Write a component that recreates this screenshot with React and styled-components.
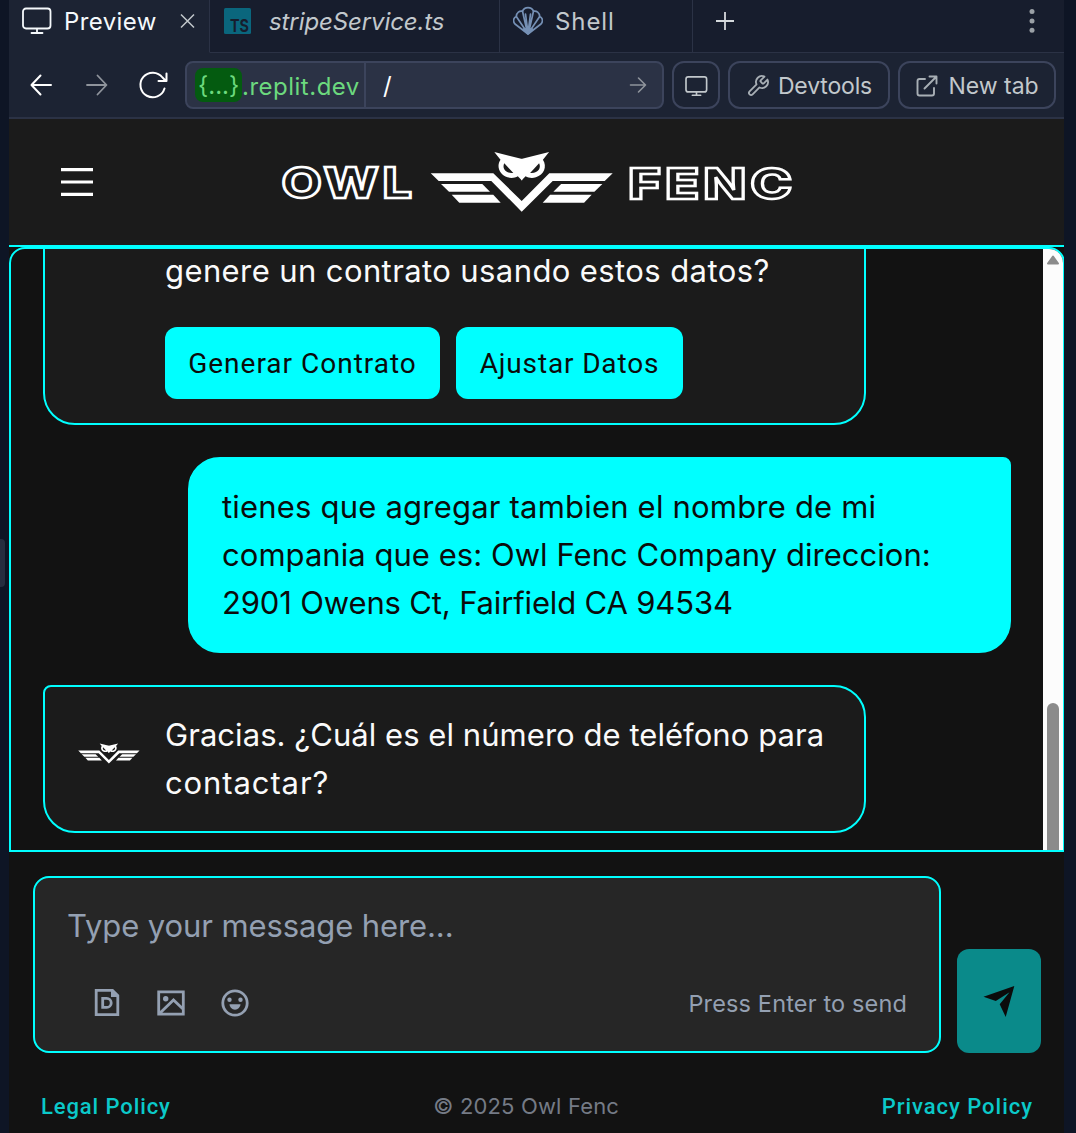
import React from "react";
import styled, { createGlobalStyle } from "styled-components";

const Global = createGlobalStyle`
  * { box-sizing: border-box; }
  html, body { margin: 0; background: #0e1525; }
  button { font: inherit; border: 0; }
`;

const CYAN = "#00ffff";

const Workspace = styled.div`
  display: flex;
  width: 1076px;
  height: 1133px;
  overflow: hidden;
  background: #0e1525;
  font-family: Inter, "Liberation Sans", sans-serif;
`;
const Gutter = styled.div`
  display: flex;
  align-items: center;
  width: 9px;
  flex: none;
`;
const Grip = styled.div`
  width: 5px;
  height: 48px;
  margin-bottom: 7px;
  border-radius: 0 4px 4px 0;
  background: #262d3f;
`;
const Pane = styled.main`
  display: flex;
  flex-direction: column;
  width: 1055px;
  flex: none;
  overflow: hidden;
  background: #121212;
`;

const Label = styled.span`
  letter-spacing: ${(p) => p.$track || 0}px;
  white-space: pre;
`;

const TabBar = styled.nav`
  display: flex;
  flex: none;
  height: 53px;
  background: #171d2d;
  color: #c2c8cc;
  font-size: 24px;
  line-height: 43px;
`;
const Tab = styled.div`
  display: flex;
  align-items: flex-start;
  flex: none;
  width: ${(p) => p.$w}px;
  padding-left: 13px;
  border-right: 1px solid #2b3245;
  border-bottom: 1px solid ${(p) => (p.$active ? "#1c2333" : "#2b3245")};
  background: ${(p) => (p.$active ? "#1c2333" : "transparent")};
  color: ${(p) => (p.$active ? "#f5f9fc" : "#c2c8cc")};
  font-style: ${(p) => (p.$italic ? "italic" : "normal")};
  svg { flex: none; margin-top: 6px; }
  span { margin-left: ${(p) => p.$gap || 12}px; }
`;
const CloseIcon = styled.svg`
  margin-left: 22px;
`;
const TabActions = styled.div`
  display: flex;
  flex: 1;
  justify-content: space-between;
  padding: 6px 24px 0 15px;
  border-bottom: 1px solid #2b3245;
`;

const AddressBar = styled.div`
  display: flex;
  align-items: center;
  flex: none;
  height: 66px;
  padding: 0 8px 0 17px;
  border-bottom: 2px solid #2b3245;
  background: #1c2333;
  color: #c2c8cc;
  font-size: 24px;
`;
const NavIcons = styled.div`
  display: flex;
  align-items: center;
  width: 159px;
  gap: 26px;
`;
const Url = styled.div`
  display: flex;
  align-items: center;
  width: 479px;
  height: 48px;
  border: 2px solid #3c445c;
  border-radius: 8px;
  background: #2b3245;
`;
const Domain = styled.div`
  display: flex;
  align-items: center;
  width: 179px;
  height: 44px;
  padding: 2px 0 0 8px;
  border-right: 2px solid #3c445c;
  color: #6cd97e;
`;
const Chip = styled.span`
  width: 47px;
  height: 34px;
  margin-bottom: 2px;
  padding-left: 3px;
  border-radius: 8px;
  background: #045b10;
  line-height: 35px;
`;
const Path = styled.div`
  display: flex;
  flex: 1;
  align-items: center;
  justify-content: space-between;
  padding: 0 13px 0 17px;
  color: #fff;
`;
const Tool = styled.button`
  display: flex;
  align-items: center;
  justify-content: center;
  gap: ${(p) => p.$gap || 0}px;
  width: ${(p) => p.$w}px;
  height: 48px;
  margin-left: 8px;
  padding: 1px 0 0;
  border: 2px solid #3c445c;
  border-radius: 12px;
  background: transparent;
  color: #c2c8cc;
  font-size: 23px;
`;

const Header = styled.header`
  display: flex;
  align-items: center;
  flex: none;
  height: 128px;
  padding-left: 52px;
  border-bottom: 2px solid ${CYAN};
  background: #1b1b1b;
`;
const Logo = styled.svg`
  margin-left: 187px;
`;
const LogoWord = styled.text`
  font: 800 43px Inter, "Liberation Sans", sans-serif;
  letter-spacing: 3px;
  fill: #1b1b1b;
  stroke: #fff;
  stroke-width: 2.5px;
`;

const Chat = styled.section`
  display: flex;
  flex: none;
  width: 1056px;
  height: 605px;
  border: 2px solid ${CYAN};
  border-radius: 16px 16px 0 0;
  overflow: hidden;
`;
const Thread = styled.div`
  display: flex;
  flex: 1;
  flex-direction: column;
  justify-content: flex-end;
  gap: 32px;
  padding: 0 32px 17px;
`;
const Bubble = styled.article`
  display: flex;
  flex: none;
  align-items: ${(p) => (p.$tall ? "flex-end" : "flex-start")};
  align-self: ${(p) => (p.$mine ? "flex-end" : "flex-start")};
  width: 823px;
  min-height: ${(p) => (p.$tall ? 290 : 0)}px;
  padding: 24px 32px;
  border: 2px solid ${CYAN};
  border-radius: ${(p) => (p.$mine ? "32px 8px 32px 32px" : "8px 32px 32px 32px")};
  background: ${(p) => (p.$mine ? CYAN : "#1b1b1b")};
  color: ${(p) => (p.$mine ? "#0b0b0b" : "#fafafa")};
  font-size: 31px;
  line-height: 48px;
`;
const Lines = styled.div`
  display: flex;
  flex-direction: column;
`;
const Avatar = styled.div`
  display: flex;
  justify-content: center;
  flex: none;
  width: 64px;
  margin-right: 24px;
  padding-top: 32px;
`;
const Choices = styled.div`
  display: flex;
  gap: 16px;
  margin-top: 32px;
`;
const Choice = styled.button`
  width: ${(p) => p.$w}px;
  height: 72px;
  padding: 2px 0 0;
  border-radius: 12px;
  background: ${CYAN};
  color: #0b0b0b;
  font-family: Roboto, sans-serif;
  font-size: 28px;
`;
const Scrollbar = styled.div`
  display: flex;
  flex-direction: column;
  justify-content: space-between;
  align-items: center;
  width: 20px;
  padding-top: 5px;
  background: #fcfcfc;
`;
const Thumb = styled.div`
  width: 12px;
  height: 147px;
  border-radius: 6px 6px 0 0;
  background: #8b8b8b;
`;

const Composer = styled.form`
  display: flex;
  flex: none;
  align-items: flex-end;
  gap: 16px;
  padding: 24px 23px 0 24px;
`;
const MessageBox = styled.div`
  display: flex;
  flex-direction: column;
  justify-content: space-between;
  width: 908px;
  height: 177px;
  padding: 24px 32px 28px 32px;
  border: 2px solid ${CYAN};
  border-radius: 16px;
  background: #262626;
  color: #94a0b2;
`;
const Placeholder = styled.div`
  font-size: 31px;
  line-height: 48px;
`;
const BoxTools = styled.div`
  display: flex;
  align-items: center;
  gap: 32px;
  height: 40px;
  padding-left: 24px;
  font-size: 23.5px;
`;
const Hint = styled.div`
  margin-left: auto;
`;
const Send = styled.button`
  display: flex;
  align-items: center;
  justify-content: center;
  width: 84px;
  height: 104px;
  padding: 0;
  border-radius: 12px;
  background: #0a8a8a;
`;
const Footer = styled.footer`
  display: flex;
  flex: none;
  justify-content: space-between;
  align-items: center;
  height: 48px;
  margin-top: 29px;
  padding: 0 31px 0 32px;
  color: #757b86;
  font-size: 22px;
`;
const PolicyLink = styled.a`
  color: #0bc9c9;
  font-family: Roboto, sans-serif;
  font-weight: 500;
`;

const Stroke = ({ size = 24, h, w = 2, children, color = "currentColor", box }) => (
  <svg width={size} height={h || size} viewBox={box || `0 0 ${size} ${h || size}`} fill="none"
    stroke={color} strokeWidth={w} strokeLinecap="round" strokeLinejoin="round">{children}</svg>
);

const Wing = () => (
  <>
    <path d="M441 184H482.3L490 191.7H449Z" />
    <path d="M451.7 194.7H493.3L500.7 202.7H459.3Z" />
  </>
);
const HalfHead = () => (
  <path d="M494.3 152L522.2 159V180.300H521.700L517.800 176.200C515 178 511 178.400 507.500 177.300C499.500 175 496 166.500 500.500 159.800ZM504.300 163.300C501.800 168 505.500 173.800 513.300 172.900Z" fillRule="evenodd" />
);
const OwlMark = () => (
  <g fill="#fff">
    <path d="M430.700 173.300H493.300L521.700 201L549.300 173.300H612.700L604.700 181H552.700L521.700 211.700L491.300 181H438.700Z" />
    <Wing />
    <HalfHead />
    <g transform="translate(1043.4 0) scale(-1 1)"><Wing /><HalfHead /></g>
  </g>
);

const Monitor = ({ small }) => (
  <Stroke size={small ? 23 : 30} h={small ? 21 : 28} box="0 0 30 28" w={small ? 2.2 : 1.8}>
    <rect x="1" y="2.500" width="27.500" height="20" rx="3" />
    <path d="M15 23V27M9.500 27H20.500" />
  </Stroke>
);

export default function App() {
  return (
    <Workspace>
      <Global />
      <Gutter><Grip /></Gutter>
      <Pane>
        <TabBar>
          <Tab $active $w={201}>
            <Monitor />
            <Label $track={0.4}>Preview</Label>
            <CloseIcon width="18" height="30" viewBox="0 0 18 30" stroke="#c2c8cc" strokeWidth="1.5">
              <path d="M2 8.500L15 21.500M15 8.500L2 21.500" />
            </CloseIcon>
          </Tab>
          <Tab $italic $w={290} $gap={18}>
            <svg width="28" height="30" viewBox="0 0 28 30">
              <rect x="1" y="2" width="27" height="26" rx="1.500" fill="#0a667d" />
              <text x="7" y="26" textLength="19" lengthAdjust="spacingAndGlyphs" fontFamily="Inter, sans-serif" fontStyle="normal" fontWeight="700" fontSize="17" fill="#171d2d">TS</text>
            </svg>
            <Label $track={-0.1}>stripeService.ts</Label>
          </Tab>
          <Tab $w={193}>
            <Stroke size={30} color="#7590b5" w={1.7}>
              <path d="M15 28L2 18C-0.500 15 0.500 11.500 3.300 10.500C3.500 6.500 6.500 4.500 9.500 5.200C11.500 0.500 18.500 0.500 20.500 5.200C23.500 4.500 26.500 6.500 26.700 10.500C29.500 11.500 30.500 15 28 18Z" />
              <path d="M14.500 27L3.300 10.500M14.500 27L9.500 5.200M15.500 27L20.500 5.200M15.500 27L26.700 10.500M15 27L12.500 8M15 27L17.500 8" />
              <path d="M10.500 23H19.500L15 28Z" fill="#7590b5" />
            </Stroke>
            <Label $track={0.9}>Shell</Label>
          </Tab>
          <TabActions>
            <svg width="34" height="30" viewBox="0 0 34 30" stroke="#d5d9dc" strokeWidth="1.800"><path d="M17 6V24M8 15H26" /></svg>
            <svg width="16" height="30" viewBox="0 0 16 30" fill="#9aa0a6"><circle cx="8" cy="5.500" r="2.500" /><circle cx="8" cy="15" r="2.500" /><circle cx="8" cy="24.300" r="2.500" /></svg>
          </TabActions>
        </TabBar>

        <AddressBar>
          <NavIcons>
            <Stroke size={30} color="#fff"><path d="M25 15H6M14.500 5.500L5.500 15L14.500 24.500" /></Stroke>
            <Stroke size={30} color="#8f949c" w={1.8}><path d="M5 15H24M15.500 5.500L24.500 15L15.500 24.500" /></Stroke>
            <Stroke size={32} color="#fff">
              <path d="M26.500 19.500A12.300 12.300 0 1 1 24.500 8.500L27.500 11.500M28.500 4.500V12H20.500" />
            </Stroke>
          </NavIcons>
          <Url>
            <Domain><Chip>{"{...}"}</Chip><Label $track={0.5}>.replit.dev</Label></Domain>
            <Path>
              <span>/</span>
              <Stroke size={22} color="#8f949c" w={1.6}><path d="M3.500 11H18.500M11.500 4L18.500 11L11.500 18" /></Stroke>
            </Path>
          </Url>
          <Tool $w={48}><Monitor small /></Tool>
          <Tool $w={162} $gap={8}>
            <Stroke size={24} box="0 0 24 24" w={1.8} color="#a8afb5">
              <path d="M14.700 6.300a1 1 0 0 0 0 1.400l1.600 1.600a1 1 0 0 0 1.400 0l3.770-3.770a6 6 0 0 1-7.940 7.940l-6.910 6.910a2.120 2.120 0 0 1-3-3l6.910-6.910a6 6 0 0 1 7.940-7.940l-3.760 3.760z" />
            </Stroke>
            <Label $track={-0.15}>Devtools</Label>
          </Tool>
          <Tool $w={158} $gap={9}>
            <Stroke size={24} w={1.9} color="#a8afb5">
              <path d="M10 5H4.500Q2.500 5 2.500 7V19.500Q2.500 21.500 4.500 21.500H17Q19 21.500 19 19.500V14M9.500 14.500L21 3M14.500 2.500H21.500V9.500" />
            </Stroke>
            <Label>New tab</Label>
          </Tool>
        </AddressBar>

        <Header>
          <svg width="32" height="28" viewBox="0 0 32 28" fill="#fff"><path d="M0 0H32V3.200H0ZM0 12.400H32V15.600H0ZM0 24.800H32V28H0Z" /></svg>
          <Logo width="516" height="64" viewBox="280 150 516 64">
            <LogoWord x="281.5" y="198" textLength="134" lengthAdjust="spacingAndGlyphs">OWL</LogoWord>
            <OwlMark />
            <LogoWord x="628" y="198.5" textLength="168" lengthAdjust="spacingAndGlyphs">FENC</LogoWord>
          </Logo>
        </Header>

        <Chat>
          <Thread>
            <Bubble $tall>
              <Avatar />
              <Lines>
                <Label $track={0.4}>genere un contrato usando estos datos?</Label>
                <Choices>
                  <Choice $w={275}><Label $track={1}>Generar Contrato</Label></Choice>
                  <Choice $w={227}><Label $track={0.85}>Ajustar Datos</Label></Choice>
                </Choices>
              </Lines>
            </Bubble>
            <Bubble $mine>
              <Lines>
                <Label $track={0.2}>tienes que agregar tambien el nombre de mi</Label>
                <Label $track={0.04}>compania que es: Owl Fenc Company direccion:</Label>
                <Label $track={-0.15}>2901 Owens Ct, Fairfield CA 94534</Label>
              </Lines>
            </Bubble>
            <Bubble>
              <Avatar><svg width="62" height="21" viewBox="430 151 184 62"><OwlMark /></svg></Avatar>
              <Lines>
                <Label $track={0.05}>Gracias. ¿Cuál es el número de teléfono para</Label>
                <Label $track={0.9}>contactar?</Label>
              </Lines>
            </Bubble>
          </Thread>
          <Scrollbar>
            <svg width="14" height="11" viewBox="0 0 14 11"><path d="M7 2.500L12 9.500H2Z" fill="#8b8b8b" stroke="#8b8b8b" strokeWidth="2" strokeLinejoin="round" /></svg>
            <Thumb />
          </Scrollbar>
        </Chat>

        <Composer>
          <MessageBox>
            <Placeholder><Label $track={-0.1}>Type your message here...</Label></Placeholder>
            <BoxTools>
              <Stroke size={32} w={2.8}>
                <g strokeLinecap="butt" strokeLinejoin="miter">
                  <path d="M5.200 3.300H21.500L26.800 8.500V27.700H5.200Z" />
                  <path d="M20 2.500V10H27.500Z" fill="currentColor" stroke="none" />
                  <path d="M11.700 11.400H15.700A4.500 4.500 0 0 1 15.700 20.400H11.700Z" />
                </g>
              </Stroke>
              <Stroke size={32} w={2.8}>
                <g strokeLinecap="butt" strokeLinejoin="miter">
                  <path d="M3.700 4.800H28.300V27.200H3.700ZM4.500 26.500L18.500 13L28 22" />
                  <circle cx="10.700" cy="11.700" r="2.700" fill="currentColor" stroke="none" />
                </g>
              </Stroke>
              <Stroke size={32} w={2.8}>
                <circle cx="16" cy="16" r="12.200" />
                <g fill="currentColor" stroke="none">
                  <circle cx="10.500" cy="12.700" r="2.200" /><circle cx="21.500" cy="12.700" r="2.200" />
                  <path d="M10.500 17.200H21.500A5.500 5.500 0 0 1 10.500 17.200Z" />
                </g>
              </Stroke>
              <Hint><Label $track={0.15}>Press Enter to send</Label></Hint>
            </BoxTools>
          </MessageBox>
          <Send>
            <svg width="34" height="34" viewBox="0 0 34 34" fill="#0b0b0b"><path d="M1.500 12.700L32.300 2L23.700 33L17.700 20.300L27.500 8.200L13.800 17Z" /></svg>
          </Send>
        </Composer>

        <Footer>
          <PolicyLink><Label $track={0.9}>Legal Policy</Label></PolicyLink>
          <Label $track={0.15}>© 2025 Owl Fenc</Label>
          <PolicyLink><Label $track={0.98}>Privacy Policy</Label></PolicyLink>
        </Footer>
      </Pane>
    </Workspace>
  );
}
